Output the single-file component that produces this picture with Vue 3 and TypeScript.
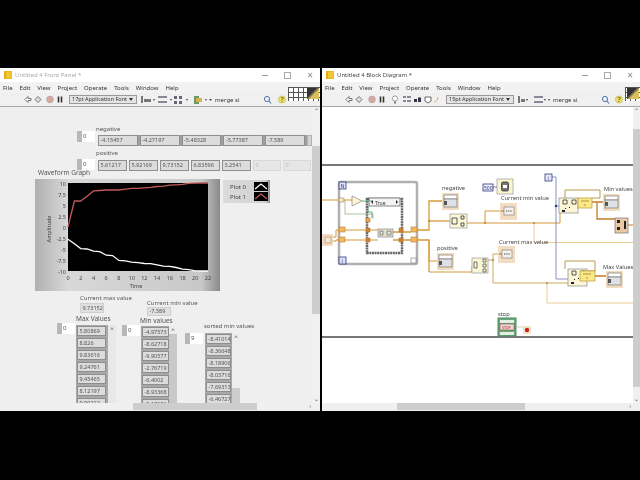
<script setup lang="ts">
const menus = ["File", "Edit", "View", "Project", "Operate", "Tools", "Window", "Help"]

const negative = ["-4.15457", "-4.27197", "-5.48328", "-5.77387", "-7.589"]
const positive = ["5.61217", "5.92169", "9.73152", "6.83596", "3.2541"]
const maxValues = ["5.80869", "8.826", "9.83616", "9.24761", "9.45465", "8.12197", "9.90222"]
const minValues = ["-4.97573", "-8.62718", "-9.90577", "-2.76719", "-6.4002", "-8.93368", "-5.17182"]
const sortedMin = ["-8.41014", "-8.36648", "-8.18906", "-8.03716", "-7.69313", "-6.46727"]

const plot0 = [-2.8, -3.8, -4.9, -5, -5.5, -5.6, -6.4, -6.5, -7.6, -7.7, -8, -8.1, -8.3, -8.35, -8.6, -8.9, -8.95, -9.2, -9.6, -9.7, -9.95, -10, -10]
const plot1 = [0, 5.9, 5.9, 7, 8.2, 8.3, 8.4, 8.4, 8.4, 8.6, 8.8, 8.8, 8.9, 9, 9.2, 9.3, 9.5, 9.6, 9.7, 9.9, 9.95, 10, 10]

const plotX = (t: number) => (t * 140) / 22
const plotY = (v: number) => ((10 - v) * 88) / 20
const toPoints = (values: number[]) => values.map((v, t) => `${plotX(t).toFixed(1)},${plotY(v).toFixed(1)}`).join(" ")

const yTicks = ["10", "7.5", "5", "2.5", "0", "-2.5", "-5", "-7.5", "-10"]
const xTicks = [0, 2, 4, 6, 8, 10, 12, 14, 16, 18, 20, 22]

// terminals on the diagram: array indicators share one look
const arrayTerminals = [
  { x: 442, y: 192 },
  { x: 437, y: 252 },
  { x: 603, y: 193 },
  { x: 606, y: 270 },
]
const numTerminals = [
  { x: 500, y: 202 },
  { x: 498, y: 245 },
]
const tunnels = [
  { x: 339, y: 226 },
  { x: 339, y: 236 },
  { x: 411, y: 226 },
  { x: 411, y: 236 },
]
</script>

<template>
  <div class="desktop">
    <section class="window">
      <header class="title inactive">
        <span class="app-icon"></span>
        <span class="title-text">Untitled 4 Front Panel *</span>
        <span class="win-btns"><i class="min"></i><i class="max"></i><i class="close">×</i></span>
      </header>
      <nav class="menu">
        <span v-for="m in menus" :key="m">{{ m }}</span>
      </nav>
      <div class="toolbar">
        <svg class="tools" viewBox="0 0 320 13" width="320" height="13">
          <path d="M25 6.5l3-3v2h3v2h-3v2z" fill="#fff" stroke="#555" stroke-width=".8" />
          <path d="M35 6.5l3-3 3 3-3 3z" fill="#ddd" stroke="#555" stroke-width=".8" />
          <circle cx="50" cy="6.5" r="3.4" fill="#d9a6a0" stroke="#aaa" stroke-width=".6" />
          <path d="M58.5 3.5v6M61.5 3.5v6" stroke="#333" stroke-width="1.6" />
          <path d="M141 3h2v7h-2zM144 6h7v3h-7z" fill="#777" />
          <path d="M158 3h9v2h-9zM158 8h9v2h-9z" fill="#889" />
          <path d="M174 3h3v3h-3zM179 3h3v3h-3zM174 8h3v3h-3zM179 8h3v3h-3z" fill="#667" />
          <path d="M194 3h5v8h-5z" fill="#6a9a6a" />
          <path d="M196 5h6v4h-6z" fill="#d8b050" />
          <path d="M153 6l2 0-1 2zM170 6l2 0-1 2zM186 6l2 0-1 2zM205 6l2 0-1 2zM209 6l3 0-1.5 2z" fill="#444" />
          <circle cx="267" cy="6" r="2.6" fill="none" stroke="#4a78b0" stroke-width="1" />
          <path d="M269 8l2 2.5" stroke="#4a78b0" stroke-width="1.2" />
          <circle cx="282" cy="6.5" r="3.6" fill="#eee070" stroke="#b0a830" stroke-width=".5" />
          <text x="280.6" y="9" class="help">?</text>
        </svg>
        <span class="font-box left-font">17pt Application Font<b></b></span>
        <span class="search left-search">merge si</span>
        <span class="vi-icon left-vi"></span>
      </div>
      <div class="body">
        <div class="canvas panel">
          <span class="label neg-label">negative</span>
          <span class="index neg-index">0</span>
          <div class="row neg-row">
            <span v-for="v in negative" :key="v" class="cell wide">{{ v }}</span>
            <span class="cell sliver"></span>
          </div>
          <span class="label pos-label">positive</span>
          <span class="index pos-index">0</span>
          <div class="row pos-row">
            <span v-for="v in positive" :key="v" class="cell">{{ v }}</span>
            <span class="cell dim">0</span>
            <span class="cell dim">0</span>
          </div>

          <span class="label graph-label">Waveform Graph</span>
          <div class="graph">
            <svg viewBox="0 0 185 112" width="185" height="112">
              <rect x="33" y="4" width="140" height="88" fill="#000" />
              <g transform="translate(33 4)">
                <polyline :points="toPoints(plot0)" fill="none" stroke="#fff" stroke-width="1.3" />
                <polyline :points="toPoints(plot1)" fill="none" stroke="#c05a5a" stroke-width="1.3" />
              </g>
              <text
                v-for="(t, i) in yTicks"
                :key="t"
                x="31"
                :y="6.5 + i * 11"
                text-anchor="end"
                class="tick"
              >{{ t }}</text>
              <text
                v-for="t in xTicks"
                :key="t"
                :x="33 + plotX(t)"
                y="101"
                text-anchor="middle"
                class="tick"
              >{{ t }}</text>
              <text x="101" y="109" text-anchor="middle" class="tick">Time</text>
              <text transform="translate(16 50) rotate(-90)" text-anchor="middle" class="tick">Amplitude</text>
            </svg>
          </div>
          <div class="legend">
            <div class="legend-row">Plot 0
              <svg viewBox="0 0 14 9" width="14" height="9"><rect width="14" height="9" fill="#000" /><path d="M1 7l6-5 6 5" fill="none" stroke="#fff" stroke-width="1.2" /></svg>
            </div>
            <div class="legend-row">Plot 1
              <svg viewBox="0 0 14 9" width="14" height="9"><rect width="14" height="9" fill="#000" /><path d="M1 7l6-5 6 5" fill="none" stroke="#c05a5a" stroke-width="1.2" /></svg>
            </div>
          </div>

          <span class="label cmax-label">Current max value</span>
          <span class="cell lone cmax">9.73152</span>
          <span class="label cmin-label">Current min value</span>
          <span class="cell lone cmin">-7.589</span>

          <span class="label max-label">Max Values</span>
          <span class="index max-index">0</span>
          <div class="col max-col">
            <span v-for="v in maxValues" :key="v" class="cell tall">{{ v }}</span>
          </div>
          <span class="mini-scroll max-scroll"><i>^</i></span>

          <span class="label min-label">Min values</span>
          <span class="index min-index">0</span>
          <div class="col min-col">
            <span v-for="v in minValues" :key="v" class="cell tall">{{ v }}</span>
          </div>
          <span class="mini-scroll min-scroll filled"><i>^</i></span>

          <span class="label sorted-label">sorted min values</span>
          <span class="index sorted-index">9</span>
          <div class="col sorted-col">
            <span v-for="v in sortedMin" :key="v" class="cell tall">{{ v }}</span>
          </div>
          <span class="mini-scroll sorted-scroll"><i>^</i><u></u></span>
        </div>
        <div class="vscroll left-v"><span>⌃</span><i></i><span class="down">⌄</span></div>
      </div>
      <div class="hscroll"><i class="left-h"></i><span>›</span></div>
    </section>

    <section class="window">
      <header class="title">
        <span class="app-icon"></span>
        <span class="title-text">Untitled 4 Block Diagram *</span>
        <span class="win-btns"><i class="min"></i><i class="max"></i><i class="close">×</i></span>
      </header>
      <nav class="menu">
        <span v-for="m in menus" :key="m">{{ m }}</span>
      </nav>
      <div class="toolbar">
        <svg class="tools" viewBox="322 0 318 13" width="318" height="13">
          <path d="M346 6.5l3-3v2h3v2h-3v2z" fill="#fff" stroke="#555" stroke-width=".8" />
          <path d="M356 6.5l3-3 3 3-3 3z" fill="#ddd" stroke="#555" stroke-width=".8" />
          <circle cx="372" cy="6.5" r="3.4" fill="#d9a6a0" stroke="#aaa" stroke-width=".6" />
          <path d="M380.5 3.5v6M383.5 3.5v6" stroke="#333" stroke-width="1.6" />
          <circle cx="395" cy="5.5" r="2.6" fill="#fff" stroke="#777" stroke-width=".7" />
          <path d="M394 8.5h2v2h-2z" fill="#777" />
          <path d="M403 3h3v2h-3zM407 3h4v2h-4zM403 7h3v2h-3zM407 7h4v2h-4z" fill="#889" />
          <path d="M414 6h3v3h-3zM418 4.5h3v4.500h-3z" fill="#334" />
          <path d="M425 4h6v4l-3 2-3-2z" fill="#fff" stroke="#444" stroke-width=".8" />
          <path d="M434 9c2 0 4-2 4-5" fill="none" stroke="#d0b060" stroke-width="1" />
          <path d="M518 3h2v7h-2zM521 6h4v3h-4z" fill="#777" />
          <path d="M534 3h9v2h-9zM534 8h9v2h-9z" fill="#889" />
          <path d="M526 6l2 0-1 2zM544 6l2 0-1 2zM548 6l2 0-1 2z" fill="#444" />
          <circle cx="605" cy="6" r="2.6" fill="none" stroke="#4a78b0" stroke-width="1" />
          <path d="M607 8l2 2.500" stroke="#4a78b0" stroke-width="1.2" />
          <circle cx="619" cy="6.5" r="3.6" fill="#eee070" stroke="#b0a830" stroke-width=".5" />
          <text x="617.600" y="9" class="help">?</text>
        </svg>
        <span class="font-box right-font">15pt Application Font<b></b></span>
        <span class="search right-search">merge si</span>
        <span class="vi-icon right-vi"></span>
      </div>
      <div class="body">
        <div class="canvas diagram">
          <svg viewBox="322 106 311 297" width="311" height="297">
            <!-- flat sequence rails -->
            <rect x="322" y="163" width="311" height="2" fill="#777" />
            <rect x="322" y="335" width="311" height="2" fill="#777" />

            <!-- while loop -->
            <rect x="339" y="181" width="78" height="82" rx="2" fill="#fff" stroke="#b0b0b0" stroke-width="2.500" />
            <rect x="339" y="181" width="7" height="7" fill="#dfe0f2" stroke="#2c3a80" stroke-width=".8" />
            <text x="340.500" y="187" class="tiny blue">N</text>
            <rect x="339" y="256" width="7" height="7" fill="#dfe0f2" stroke="#2c3a80" stroke-width=".8" />
            <text x="341.500" y="261.500" class="tiny blue">i</text>
            <rect x="411" y="257" width="5" height="5" fill="#fff" stroke="#888" stroke-width=".7" />

            <!-- case structure -->
            <rect x="367" y="198" width="35" height="54" fill="#fff" stroke="#666" stroke-width="2.500" stroke-dasharray="2 .6" />
            <rect x="369" y="197" width="31" height="8" fill="#f4f4f4" stroke="#555" stroke-width=".7" />
            <text x="375" y="203.500" class="tiny">True</text>
            <path d="M371 201l2-2v4zM398 201l-2-2v4z" fill="#222" />

            <!-- wires inside -->
            <g fill="none" stroke="#d69a3a" stroke-width="1">
              <path d="M322 199H352" />
              <path d="M333 236h3v-7h42M333 240h3v-1h42" />
              <path d="M393 231h18M393 239h18" stroke-width="1.300" />
              <path d="M411 229h18V200h13M411 239h18v32" stroke-width="1.300" />
              <path d="M429 220h21" stroke-width="1.300" />
              <path d="M429 239v21h8" />
              <path d="M429 271h43v-6" />
              <path d="M467 222h93M485 222v-12h15" />
              <path d="M534 222v19.500h99" stroke="#e8cc92" />
              <path d="M488 259h5v-6h5M493 259v23h75" stroke="#cca85a" />
              <path d="M547 282v20h86" stroke="#e8cc92" />
              <path d="M560 222v-12" />
              <path d="M565 197v-8h35v8h-8M565 268v-8h30v10h-8" stroke="#b89a48" />
              <path d="M592 201h11M597 201v17h18M595 275h11" stroke="#c87a2a" stroke-width="1.300" />
              <path d="M628 224h5" stroke="#c87a2a" />
            </g>
            <path d="M345 199v14h28v5" fill="none" stroke="#9ab48a" stroke-width=".8" />
            <path d="M368 205v6h4v6" fill="none" stroke="#3f9f5f" stroke-width=".8" />
            <path d="M362 200h10" fill="none" stroke="#3f9f5f" stroke-width=".8" />
            <path d="M552 176h4v102h12M556 205h4" fill="none" stroke="#6a74b8" stroke-width=".8" />
            <circle cx="556" cy="205" r="1.200" fill="#2c3a80" />
            <circle cx="485" cy="222" r="1" fill="#b8842e" />
            <circle cx="534" cy="222" r="1" fill="#b8842e" />
            <circle cx="493" cy="259" r="1" fill="#a88a3e" />
            <circle cx="547" cy="282" r="1" fill="#a88a3e" />
            <circle cx="429" cy="220" r="1" fill="#b8842e" />

            <!-- nodes -->
            <rect x="339" y="197" width="5" height="4" fill="#f4e4c4" stroke="#a88a4e" stroke-width=".6" />
            <path d="M352 195l10 5-10 5z" fill="#fff6d0" stroke="#888" stroke-width=".7" />
            <rect x="320" y="233" width="13" height="12" fill="#f4dcc4" />
            <rect x="325" y="236" width="6" height="6" fill="#ece8d8" stroke="#b08a50" stroke-width=".6" />
            <rect
              v-for="(t, i) in tunnels"
              :key="i"
              :x="t.x"
              :y="t.y"
              width="6"
              height="5"
              fill="#f0b860"
              stroke="#c08030"
              stroke-width=".6"
            />
            <rect x="366" y="217" width="4" height="4" fill="#e8a850" stroke="#a07030" stroke-width=".5" />
            <rect x="366" y="227" width="4" height="4" fill="#d88030" stroke="#a07030" stroke-width=".5" />
            <rect x="366" y="237" width="4" height="4" fill="#d88030" stroke="#a07030" stroke-width=".5" />
            <rect x="399" y="227" width="4" height="4" fill="#d88030" stroke="#a07030" stroke-width=".5" />
            <rect x="399" y="237" width="4" height="4" fill="#d88030" stroke="#a07030" stroke-width=".5" />
            <rect x="378" y="228" width="15" height="8" fill="#e4e2d0" stroke="#777" stroke-width=".6" />
            <path d="M380 230h3v4h-3zM387 230h4v4h-4z" fill="none" stroke="#555" stroke-width=".6" />

            <g v-for="(t, i) in arrayTerminals" :key="'a' + i">
              <rect :x="t.x" :y="t.y" width="17" height="17" fill="#f2dcc2" />
              <rect :x="t.x + 2" :y="t.y + 2" width="13" height="4" fill="#fff" stroke="#666" stroke-width=".6" />
              <rect :x="t.x + 2" :y="t.y + 6" width="13" height="8" fill="#dfe0e6" stroke="#666" stroke-width=".6" />
              <rect :x="t.x + 2" :y="t.y + 8" width="3" height="4" fill="#555" />
            </g>
            <g v-for="(t, i) in numTerminals" :key="'n' + i">
              <rect :x="t.x" :y="t.y" width="17" height="17" fill="#f2dcc2" />
              <rect :x="t.x + 4" :y="t.y + 4" width="10" height="8" fill="#f6f2ea" stroke="#777" stroke-width=".6" />
              <path :d="`M${t.x + 1} ${t.y + 8}h3`" stroke="#a06a20" stroke-width="1" />
              <path :d="`M${t.x + 6} ${t.y + 8}h6`" stroke="#777" stroke-width="1.500" stroke-dasharray="1 .8" />
            </g>

            <rect x="450" y="213" width="17" height="14" fill="#fbf6d8" stroke="#999" stroke-width=".7" />
            <path d="M452 217h5v6h-5zM461 215h3v3h-3zM461 222h3v3h-3z" fill="none" stroke="#333" stroke-width=".8" />
            <rect x="472" y="257" width="16" height="15" fill="#fbf6d8" stroke="#999" stroke-width=".7" />
            <path d="M474 261h3v6h-3zM483 258h3v3h-3zM483 263h3v3h-3zM483 268h3v3h-3z" fill="none" stroke="#555" stroke-width=".8" />

            <rect x="483" y="183" width="10" height="7" fill="#eef" stroke="#2c3a80" stroke-width=".8" />
            <text x="484" y="189" class="tiny blue">500</text>
            <rect x="497" y="178" width="16" height="15" fill="#fbf6d0" stroke="#999" stroke-width=".7" />
            <rect x="501.500" y="181" width="7" height="9" rx="1.500" fill="#777" stroke="#222" stroke-width=".7" />
            <rect x="503" y="184" width="4" height="3" fill="#fff" />
            <path d="M493 186h4" stroke="#3f4aa0" stroke-width=".7" />

            <rect x="545" y="173" width="7" height="7" fill="#e8e8f8" stroke="#2c3a80" stroke-width=".8" />
            <text x="547.500" y="179" class="tiny blue">i</text>

            <rect x="559" y="197" width="19" height="15" fill="#fbf6d8" stroke="#888" stroke-width=".7" />
            <path d="M563 199h4v4h-4zM572 199h4v4h-4z" fill="none" stroke="#333" stroke-width=".8" />
            <path d="M565 207h1v1h-1zM569 206h1v1h-1zM562 209h3v2h-3z" fill="#222" />
            <rect x="578" y="197" width="14" height="10" fill="#fbe88a" stroke="#b89a30" stroke-width=".7" />
            <path d="M581 200h8M584 204h2" stroke="#a87a20" stroke-width=".8" />

            <rect x="568" y="268" width="19" height="17" fill="#fbf6d8" stroke="#888" stroke-width=".7" />
            <path d="M572 270h4v4h-4zM581 270h4v4h-4z" fill="none" stroke="#333" stroke-width=".8" />
            <path d="M574 278h1v1h-1zM578 277h1v1h-1zM571 281h3v2h-3z" fill="#222" />
            <rect x="580" y="270" width="15" height="10" fill="#fbe88a" stroke="#b89a30" stroke-width=".7" />
            <path d="M583 273h8M586 277h2" stroke="#a87a20" stroke-width=".8" />

            <rect x="615" y="217" width="13" height="15" fill="#ecc8a4" stroke="#777" stroke-width=".7" />
            <path d="M617 219h3v3h-3zM617 226h3v3h-3zM624 220h2v8h-2z" fill="#222" />

            <!-- stop -->
            <rect x="498" y="317" width="18" height="18" fill="#6aa878" stroke="#4e8a60" />
            <rect x="500" y="319" width="14" height="3" fill="#e4f0e4" />
            <rect x="500" y="323" width="14" height="6" fill="#efd8d4" stroke="#7c3a3a" stroke-width=".5" />
            <text x="502" y="328" class="micro red">STOP</text>
            <rect x="500" y="331" width="14" height="3" fill="#e4f0e4" />
            <path d="M516 326h7" stroke="#b8c8a8" stroke-width=".7" />
            <rect x="523" y="325" width="8" height="8" fill="#f2e4c8" />
            <circle cx="527" cy="329" r="2.200" fill="#d02020" />

            <text x="442" y="189" class="dlabel">negative</text>
            <text x="437" y="249" class="dlabel">positive</text>
            <text x="501" y="199" class="dlabel">Current min value</text>
            <text x="499" y="243" class="dlabel">Current max value</text>
            <text x="604" y="190" class="dlabel">Min values</text>
            <text x="603" y="268" class="dlabel">Max Values</text>
            <text x="498" y="315" class="dlabel">stop</text>
          </svg>
        </div>
        <div class="vscroll right-v"><span>⌃</span><i></i><span class="down">⌄</span></div>
      </div>
      <div class="hscroll"><i class="right-h"></i><span>›</span></div>
    </section>
  </div>
</template>

<style>
html,
body {
  margin: 0;
  background: #000;
}
</style>

<style scoped>
.desktop {
  width: 640px;
  height: 480px;
  box-sizing: border-box;
  padding-top: 68px;
  background: #000;
  display: grid;
  grid-template-columns: 320px 318px;
  column-gap: 2px;
  font-family: "Noto Sans", "Open Sans", sans-serif;
  font-size: 6px;
  color: #444;
  overflow: hidden;
  /* the reference is a soft video frame */
  filter: blur(0.35px);
}
.window {
  height: 343px;
  display: flex;
  flex-direction: column;
  background: #f0f0f0;
  overflow: hidden;
}
.title {
  height: 14px;
  flex: none;
  background: #fff;
  display: flex;
  align-items: center;
  padding-left: 4px;
  gap: 3px;
  color: #444;
}
.title.inactive {
  color: #aaa;
}
.app-icon {
  width: 8px;
  height: 8px;
  border-radius: 1px;
  background: #f2c830;
  box-shadow: inset 2px 0 #e8a818, inset 0 0 0 1px #e8b820;
}
.title-text {
  flex: 1;
}
.win-btns {
  display: flex;
  align-items: center;
  width: 58px;
  justify-content: space-between;
  padding-right: 7px;
  box-sizing: border-box;
}
.win-btns i {
  display: block;
  font-style: normal;
}
.min {
  width: 6px;
  height: 1px;
  background: #999;
}
.max {
  width: 5px;
  height: 5px;
  border: 1px solid #aaa;
}
.close {
  font-size: 10px;
  line-height: 8px;
  color: #888;
}
.menu {
  height: 11px;
  flex: none;
  display: flex;
  align-items: center;
  gap: 7px;
  padding-left: 3px;
  background: #f2f2f2;
  color: #333;
}
.toolbar {
  position: relative;
  height: 13px;
  flex: none;
  background: #f0f0f0;
  border-bottom: 1px solid #a8a8a8;
}
.tools {
  display: block;
}
.help {
  font-size: 7px;
  font-weight: 700;
  fill: #7a7a10;
}
.font-box {
  position: absolute;
  top: 2px;
  height: 9px;
  padding-left: 2px;
  box-sizing: border-box;
  background: #e4e4e4;
  border: 1px solid #999;
  font-size: 5.500px;
  line-height: 7px;
  color: #333;
  white-space: nowrap;
}
.font-box b {
  position: absolute;
  right: 3px;
  top: 2px;
  border: 2px solid transparent;
  border-top: 3px solid #333;
}
.left-font {
  left: 69px;
  width: 68px;
}
.right-font {
  left: 124px;
  width: 68px;
}
.search {
  position: absolute;
  top: 3px;
  line-height: 8px;
  color: #333;
}
.left-search {
  left: 215px;
}
.right-search {
  left: 231px;
}
.vi-icon {
  position: absolute;
  top: -6px;
  height: 14px;
  background-color: #fff;
  background-image: linear-gradient(#555 1px, transparent 1px), linear-gradient(90deg, #555 1px, transparent 1px);
  background-size: 5px 5px;
}
.left-vi {
  left: 288px;
  width: 32px;
}
.left-vi::after,
.right-vi::after {
  content: "";
  position: absolute;
  right: 1px;
  top: 1px;
  width: 12px;
  height: 11px;
  background: linear-gradient(135deg, #333 40%, #d8c060 60%);
}
.right-vi {
  left: 303px;
  width: 15px;
}
.body {
  flex: 1;
  min-height: 0;
  display: flex;
}
.canvas {
  position: relative;
  flex: 1;
  min-width: 0;
  overflow: hidden;
}
.panel {
  background: #efefef;
}
.diagram {
  background: #fff;
}
.diagram svg {
  display: block;
}
.vscroll {
  width: 7px;
  flex: none;
  display: flex;
  flex-direction: column;
  align-items: center;
  background: #f0f0f0;
  color: #555;
  line-height: 8px;
}
.vscroll i {
  width: 100%;
  background: #cdcdcd;
  display: block;
}
.vscroll .down {
  margin-top: auto;
}
.left-v {
  width: 8px;
}
.left-v i {
  margin-top: 31px;
  height: 168px;
}
.right-v i {
  margin-top: 14px;
  height: 258px;
}
.hscroll {
  position: relative;
  height: 8px;
  flex: none;
  background: #f0f0f0;
  line-height: 7px;
  text-align: right;
  padding-right: 9px;
  color: #555;
}
.hscroll i {
  position: absolute;
  top: 0;
  height: 7px;
  background: #cdcdcd;
}
.left-h {
  left: 133px;
  width: 124px;
}
.right-h {
  left: 75px;
  width: 128px;
}

/* front panel objects sit on a free canvas */
.label {
  position: absolute;
  white-space: nowrap;
  line-height: 8px;
  color: #555;
}
.cell {
  display: block;
  box-sizing: border-box;
  width: 29px;
  height: 11px;
  line-height: 8px;
  padding-left: 1.500px;
  font-size: 5.500px;
  background: #dcdcdc;
  border: 1.500px solid #8e8e8e;
  color: #555;
  overflow: hidden;
  white-space: nowrap;
}
.cell.wide {
  width: 40px;
}
.cell.sliver {
  width: 5px;
  background: #d4d4d4;
  border-color: #b0b0b0;
}
.cell.dim {
  width: 28px;
  background: #e6e6e6;
  border-color: #d8d8d8;
  color: #bbb;
}
.cell.tall {
  height: 10px;
  width: 29px;
  flex: none;
}
.cell.lone {
  position: absolute;
  height: 10px;
  line-height: 8px;
  background: #e0e0e0;
  border: 1px solid #d0d0d0;
}
.index {
  position: absolute;
  width: 12px;
  height: 11px;
  line-height: 10px;
  padding-left: 6px;
  box-sizing: content-box;
  background: linear-gradient(90deg, #b8b8b8 5px, #fff 5px);
  color: #555;
}
.row {
  position: absolute;
  display: flex;
  background: #a0a0a0;
  gap: 2px;
}
.col {
  position: absolute;
  display: flex;
  flex-direction: column;
  gap: 2px;
  overflow: hidden;
  background: #a8a8a8;
  padding: 1px;
}
.neg-label {
  left: 96px;
  top: 18px;
}
.neg-index {
  left: 77px;
  top: 24px;
}
.neg-row {
  left: 98px;
  top: 28px;
  width: 214px;
}
.pos-label {
  left: 96px;
  top: 42px;
}
.pos-index {
  left: 77px;
  top: 52px;
}
.pos-row {
  left: 98px;
  top: 53px;
  width: 214px;
  background: #efefef;
}
.graph-label {
  left: 38px;
  top: 62px;
  font-size: 6.500px;
}
.graph {
  position: absolute;
  left: 35px;
  top: 72px;
  width: 185px;
  height: 112px;
  background: linear-gradient(90deg, #b0b0b0, #d8d8d8 18%, #c8c8c8 90%, #8a8a8a);
}
.graph svg {
  display: block;
}
.tick {
  font-size: 5.500px;
  fill: #444;
}
.legend {
  position: absolute;
  left: 223px;
  top: 73px;
  width: 47px;
  box-sizing: border-box;
  padding: 2px 2px 2px 7px;
  display: flex;
  flex-direction: column;
  gap: 1px;
  background: linear-gradient(90deg, #dcdcdc, #d0d0d0 90%, #909090);
}
.legend-row {
  display: flex;
  justify-content: space-between;
  align-items: center;
  height: 9px;
}
.cmax-label {
  left: 80px;
  top: 187px;
}
.cmax {
  left: 80px;
  top: 196px;
  width: 24px;
}
.cmin-label {
  left: 147px;
  top: 192px;
}
.cmin {
  left: 147px;
  top: 200px;
  width: 24px;
  height: 9px !important;
  line-height: 7px !important;
}
.max-label {
  left: 76px;
  top: 208px;
  font-size: 6.500px;
}
.max-index {
  left: 57px;
  top: 216px;
}
.max-col {
  left: 76px;
  top: 218px;
  width: 31px;
  height: 79px;
}
.mini-scroll {
  position: absolute;
  width: 8px;
  background: #ededed;
  color: #444;
  text-align: center;
  line-height: 8px;
}
.mini-scroll i {
  font-style: normal;
  display: block;
}
.mini-scroll u {
  display: block;
  margin-top: 47px;
  height: 20px;
  background: #cdcdcd;
}
.max-scroll {
  left: 108px;
  top: 218px;
  height: 79px;
  background: #e8e8e8;
}
.filled {
  background: linear-gradient(#ededed 8px, #c8c8c8 8px);
}
.min-label {
  left: 140px;
  top: 210px;
  font-size: 6.500px;
}
.min-index {
  left: 122px;
  top: 218px;
}
.min-col {
  left: 141px;
  top: 219px;
  width: 27px;
  height: 78px;
}
.min-col .cell,
.sorted-col .cell {
  width: 27px;
}
.min-scroll {
  left: 169px;
  top: 219px;
  height: 78px;
}
.sorted-label {
  left: 204px;
  top: 215px;
}
.sorted-index {
  left: 185px;
  top: 226px;
}
.sorted-col {
  left: 205px;
  top: 226px;
  width: 26px;
  height: 71px;
}
.sorted-col .cell {
  width: 25px;
}
.sorted-scroll {
  left: 232px;
  top: 226px;
  height: 71px;
}

/* diagram text */
.dlabel {
  font-size: 5.700px;
  fill: #444;
}
.tiny {
  font-size: 5px;
  fill: #333;
}
.blue {
  fill: #2c3a80;
}
.micro {
  font-size: 3.500px;
}
.red {
  fill: #a02020;
}
</style>
